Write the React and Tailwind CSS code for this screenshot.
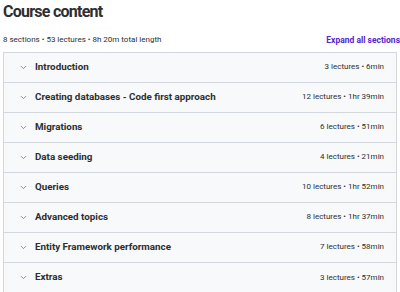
import { ChevronDown } from "lucide-react";

const sections = [
  { title: "Introduction", meta: "3 lectures • 6min" },
  { title: "Creating databases - Code first approach", meta: "12 lectures • 1hr 39min" },
  { title: "Migrations", meta: "6 lectures • 51min" },
  { title: "Data seeding", meta: "4 lectures • 21min" },
  { title: "Queries", meta: "10 lectures • 1hr 52min" },
  { title: "Advanced topics", meta: "8 lectures • 1hr 37min" },
  { title: "Entity Framework performance", meta: "7 lectures • 58min" },
  { title: "Extras", meta: "3 lectures • 57min" },
];

function SectionRow({ title, meta }) {
  return (
    <div className="flex h-[30px] items-center border-b border-[#d1d7dc] bg-[#f7f9fa] pl-[15px] pr-[12px] last:border-b-0">
      <ChevronDown className="h-[9px] w-[9px] text-[#6a6f73]" strokeWidth={2} />
      <span className="ml-[7px] flex-1 text-[9.8px] font-bold text-[#2d2f31]">{title}</span>
      <span className="text-[8px] text-[#2d2f31]">{meta}</span>
    </div>
  );
}

export default function App() {
  return (
    <div
      className="h-[292px] w-[400px] overflow-hidden bg-white pl-[3px] text-[#2d2f31]"
      style={{ fontFamily: "Roboto, 'Noto Sans', sans-serif" }}
    >
      <h2 className="pt-[1px] text-[16px] font-bold leading-[22px] tracking-[-0.75px]">Course content</h2>
      <div className="mt-[11px] flex items-center justify-between">
        <span className="text-[8px]">8 sections • 53 lectures • 8h 20m total length</span>
        <span className="text-[8.5px] font-bold text-[#5624d0]">Expand all sections</span>
      </div>
      <div className="mt-[5px] w-[394px] border border-[#d1d7dc]">
        {sections.map((s) => (
          <SectionRow key={s.title} {...s} />
        ))}
      </div>
    </div>
  );
}
